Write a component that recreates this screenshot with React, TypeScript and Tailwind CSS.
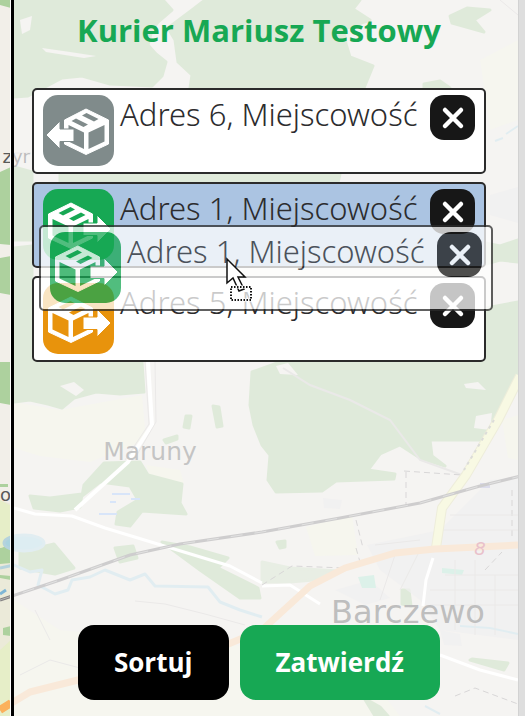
import type { ReactNode } from "react";

function MapBackground() {
  return (
    <svg
      className="absolute inset-0 h-full w-full"
      viewBox="0 0 525 716"
      preserveAspectRatio="xMinYMin slice"
      aria-hidden="true"
    >
      <rect width="525" height="716" fill="#e7e3df" />
      <rect width="12" height="716" fill="#f2efe9" />

      {/* fields */}
      <g fill="#e8e9d4">
        <path d="M14 402 L60 410 L142 395 L146 440 L90 462 L40 456 L14 448Z" />
        <path d="M14 600 L60 630 L160 640 L300 650 L380 690 L400 716 L0 716 L0 500 L14 505Z" opacity=".8" />
        <path d="M306 527 L352 515 L358 555 L315 556Z" />
        <path d="M146 465 L180 470 L184 483 L150 477Z" />
        <path d="M480 60 L518 40 L518 120 L490 130Z" opacity=".7" />
        <path d="M502 420 L518 415 L518 460 L508 458Z" />
      </g>

      {/* forests */}
      <g fill="#b0cba4" stroke="#b0cba4" strokeWidth="3" strokeLinejoin="round">
        <path d="M14 0 L163 0 L172 10 L158 22 L152 30 L148 45 L156 54 L166 62 L162 76 L152 86 L110 84 L82 76 L62 78 L28 96 L14 97Z" />
        <path d="M205 0 L360 0 L353 9 L370 20 L344 29 L346 44 L350 57 L373 66 L364 88 L190 88 L192 75 L178 62 L175 40 L168 28 L192 10Z" />
        <path d="M450 16 L467 8 L490 10 L474 20 L484 32 L452 23Z" />
        <path d="M424 84 L440 81 L450 88 L424 90Z" />
        <path d="M60 174 L340 174 L338 183 L60 183Z" />
        <path d="M14 167 L32 172 L32 240 L14 240Z M14 248 L32 246 L32 340 L14 340Z" />
        <path d="M486 243 L500 246 L518 240 L518 262 L500 260 L486 264Z" />
        <path d="M486 308 L518 302 L518 378 L486 378Z" />
        <path d="M14 300 L34 300 L34 362 L142 362 L144 392 L120 394 L96 392 L74 398 L62 408 L48 404 L30 400 L14 402Z" />
        <path d="M252 372 L280 362 L518 362 L518 378 L500 412 L480 440 L430 440 L432 456 L445 466 L420 458 L400 445 L380 454 L368 470 L395 474 L394 479 L336 481 L322 491 L276 492 L268 480 L270 455 L262 445 L254 425 L250 405Z" />
        <path d="M30 496 L50 498 L82 494 L80 507 L60 511 L34 508Z M84 485 L104 463 L140 462 L148 475 L182 484 L180 503 L186 514 L142 511 L130 526 L116 524 L118 512 L138 500 L130 486 L100 482 L82 496Z" />
        <path d="M20 552 L54 544 L74 568 L55 574 L20 568Z M115 548 L133 546 L137 558 L120 562Z" />
        <path d="M162 542 L190 547 L228 558 L218 568 L258 588 L260 598 L240 598 L200 570Z M213 406 L219 407 L222 426 L217 427Z M186 416 L191 416 L189 428 L184 427Z M164 440 L177 436 L177 439 L166 443Z M277 542 L285 541 L285 547 L280 548Z" />
        <path d="M262 562 L290 568 L338 571 L325 579 L290 582 L262 582Z" opacity=".6" />
        <path d="M402 590 L409 590 L411 606 L402 604Z M472 659 L508 663 L504 670 L470 660Z M364 698 L380 707 L388 716L375 716Z" />
      </g>
      <g fill="#e7e3df">
        <path d="M42 48 L70 52 L96 56 L84 58 L46 52Z M20 20 L32 16 L30 30 L22 34Z M60 386 L74 382 L84 390 L76 396Z M276 366 L288 363 L298 375 L280 374Z M464 384 L478 382 L486 390 L466 388Z M476 416 L492 413 L490 430 L474 428Z" />
      </g>
      <g fill="#add19e">
        <path d="M0 0 L11 0 L11 8 L0 5Z M0 172 L11 167 L11 245 L0 244Z M0 258 L11 256 L11 295 L0 293Z M0 362 L11 362 L11 405 L0 403Z M0 548 L11 545 L11 563 L0 564Z" />
        <path d="M0 484 h8 v3 h-8Z M0 575 L11 576 L11 580 L0 578Z M3 628 L11 626 L11 636 L3 635Z" />
      </g>
      <path d="M0 500 L11 506 L11 545 L0 548Z M0 650 L11 640 L11 716 L0 716Z" fill="#e6eec8" />

      {/* built-up area */}
      <g fill="#d8d8d9">
        <path d="M367 545 L440 530 L490 480 L518 478 L518 600 L518 640 L440 630 L420 600 L380 570Z" opacity=".7" />
        <path d="M335 590 L370 580 L390 598 L365 605Z M440 630 L460 634 L462 646 L444 645Z M323 498 L342 500 L340 509 L324 508Z M490 195 L525 185 L525 225 L490 215Z" opacity=".7" />
      </g>
      <path d="M358 577 L374 575 L376 588 L362 588Z M442 568 L464 570 L462 575 L442 573Z" fill="#a9dcc8" />
      <path d="M480 483 h10 v5 h-10Z" fill="#a8a9d0" />

      {/* water */}
      <g fill="none" stroke="#b5d3dd" strokeWidth="3">
        <ellipse cx="24" cy="543" rx="20" ry="8" fill="#aad3df" />
        <path d="M0 568 L14 565 L30 572 L42 570 L38 585 L55 594 L68 590 L72 580 L90 577 L105 570 L130 580 L145 574 L155 586 L208 587 L220 602 L240 610 L262 617" strokeLinejoin="round" />
        <path d="M112 494 h18 M131 499 h9 M110 502 h6 M99 514 h18" stroke="#9dbdf0" strokeWidth="2" />
        <path d="M460 626 L490 628 L518 634 M425 706 L440 714 M495 141 L503 138 M506 134 L518 126" strokeWidth="2" />
        <path d="M0 594 L6 590" stroke="#7fb6d6" />
      </g>

      {/* minor roads */}
      <g fill="none" stroke="#ffffff" strokeWidth="3" strokeLinejoin="round">
        <path d="M148 362 L152 425 L128 462 L75 510" strokeWidth="4" />
        <path d="M14 508 L35 514 L72 516 L105 528 L230 566 L262 583" />
        <path d="M433 558 L426 580 L423 606 M262 586 L290 585 L320 604 M440 655 L480 670 L518 680" />
      </g>
      <g fill="none" stroke="#cbc8c6" strokeWidth="1">
        <path d="M145 362 L149 424 L125 460 M155 362 L156 422 L134 460" />
        <path d="M283 368 L310 385 L350 400 L390 420 L420 460 L462 475" strokeWidth="2" />
        <path d="M135 601 L165 604 L205 614 L245 625 M20 675 L50 660 L80 668 M50 640 L35 610" />
        <path d="M404 471 L462 475 M406 472 L406 505 M356 520 L363 548 M356 548 L360 562 M262 585 L292 566 L345 568 M455 696 L475 688 L518 704 M485 570 L502 552 M512 490 L512 540" stroke="#9d9a9b" strokeDasharray="6 4" />
        <path d="M430 605 H518 M430 590 H518 M445 575 H518 M440 530 H518 M450 515 H518 M455 560 V630 M475 560 V635 M495 575 V635 M400 590 L420 550 M380 600 L395 555 M375 545 L420 540" />
        <path d="M500 0 L518 15 M14 153 H31" />
      </g>

      {/* main roads */}
      <g fill="none" strokeLinejoin="round">
        <path d="M520 376 L498 420 L466 475 L442 508 L436 548" stroke="#d3d2a5" strokeWidth="10" />
        <path d="M520 376 L498 420 L466 475 L442 508 L436 548" stroke="#eef0b8" strokeWidth="8" />
        <path d="M494 420 L464 470" stroke="#a8a9a0" strokeWidth="2" strokeDasharray="3 4" />
        <path d="M0 710 L30 692 L78 680 L190 660 L262 630 L310 586 L345 568 L395 553 L435 549 L518 545" stroke="#f0c8a0" strokeWidth="7" />
        <path d="M0 710 L11 703" stroke="#fbb15c" strokeWidth="8" />
        <path d="M0 600 L60 580 L130 555 L180 544 L262 532 L340 518 L420 503 L480 486 L525 475" stroke="#858384" strokeWidth="3" />
        <path d="M0 600 L60 580 L130 555 L180 544 L262 532 L340 518 L420 503 L480 486 L525 475" stroke="#b5b5b5" strokeDasharray="12 12" />
      </g>

      <g className="font-['DejaVu_Sans',sans-serif]" fill="#5a5a5a">
        <text x="150" y="460" fontSize="25" textAnchor="middle" fill="#6c6c6c">Maruny</text>
        <text x="408" y="623" fontSize="32" textAnchor="middle" fill="#5c5c5c">Barczewo</text>
        <text x="480" y="555" fontSize="18" textAnchor="middle" fontStyle="italic" fill="#c8647c">8</text>
        <text x="30" y="163" fontSize="18" textAnchor="end">zyr</text>
        <text x="11" y="501" fontSize="18" textAnchor="end">o</text>
      </g>
    </svg>
  );
}

function ParcelIcon({ kind }: { kind: "in" | "out" | "late" }) {
  const fill = { in: "#808b8b", out: "#17a854", late: "#e8930c" }[kind];
  return (
    <svg className="size-[71px] shrink-0" viewBox="0 0 71 71" aria-hidden="true">
      <rect width="71" height="71" rx="15" fill={fill} />
      <g transform={kind === "in" ? undefined : "translate(71 0) scale(-1 1)"}>
        <path
          d="M43 14 L65.500 25 V49 L43 59.500 L21.500 49 V25Z"
          fill="#fff"
          stroke="#fff"
          strokeWidth="1"
          strokeLinejoin="round"
        />
        <path
          d="M41 37.500 V54 L25.500 46.500 V30Z M45.500 37.500 L61.500 30 V46.500 L45.500 54Z M28.500 26 L33 23.500 L45 29.500 L40.500 32Z M39 20.500 L43.500 18 L55.500 24 L51 26.500Z"
          fill={fill}
        />
        <path d="M3 40 L17 26 V34 H31 V46.500 H17 V54Z" fill="#fff" stroke={fill} strokeWidth="1" />
      </g>
    </svg>
  );
}

function CloseIcon() {
  return (
    <svg className="size-6" viewBox="0 0 24 24" aria-hidden="true">
      <path d="M4 4 L20 20 M20 4 L4 20" stroke="#fff" strokeWidth="4.500" strokeLinecap="round" />
    </svg>
  );
}

function Card({
  icon,
  className = "bg-white",
  children,
}: {
  icon: "in" | "out" | "late";
  className?: string;
  children: ReactNode;
}) {
  return (
    <div
      className={`flex h-[86px] items-start gap-1.5 rounded-[5px] border-2 border-[#2b2b2b] pt-[5px] pr-[9px] pl-[9px] text-[#2c2c2e] ${className}`}
    >
      <ParcelIcon kind={icon} />
      <span className="min-w-0 flex-1 text-[31px] leading-[38px] font-light whitespace-nowrap">{children}</span>
      <button
        type="button"
        aria-label="Usuń"
        className="flex size-[45px] shrink-0 items-center justify-center rounded-[14px] bg-[#171717]"
      >
        <CloseIcon />
      </button>
    </div>
  );
}

function DragCursor() {
  return (
    <svg className="absolute top-8 left-[186px] h-12 w-8" viewBox="0 0 32 48" aria-hidden="true">
      <path
        d="M2 2 V26 L8 21 L14 34 L19 32 L13 20 H20Z"
        fill="#fff"
        stroke="#111"
        strokeWidth="1.500"
      />
      <rect x="6" y="30" width="20" height="13" fill="none" stroke="#fff" strokeWidth="3" />
      <rect x="6" y="30" width="20" height="13" fill="none" stroke="#111" strokeWidth="2" strokeDasharray="1.500 1.500" />
    </svg>
  );
}

export default function App() {
  return (
    <main className="relative flex min-h-screen overflow-hidden pl-[11px] font-['Noto_Sans','Open_Sans',sans-serif]">
      <MapBackground />
      <section className="relative flex min-w-0 flex-1 flex-col border-l-[3px] border-black bg-white/60 pr-8 pb-4 pl-[18px] shadow-[-1px_0_0_#ffffff]">
        <h1 className="pt-2 text-center font-['Open_Sans',sans-serif] text-[31px] leading-[44px] font-bold whitespace-nowrap text-[#17a854]">
          Kurier Mariusz Testowy
        </h1>
        <div className="relative mt-9">
          <ul className="flex flex-col gap-2">
            <li><Card icon="in">Adres 6, Miejscowość</Card></li>
            <li><Card icon="out" className="bg-[#abc4e2]">Adres 1, Miejscowość</Card></li>
            <li><Card icon="late">Adres 5, Miejscowość</Card></li>
          </ul>
          <div className="absolute top-[137px] left-[7px] w-full">
            <div className="opacity-75">
              <Card icon="out">Adres 1, Miejscowość</Card>
            </div>
            <DragCursor />
          </div>
        </div>
        <div className="mt-auto flex justify-center gap-[11px] pt-8 font-['Open_Sans',sans-serif] text-[26px] leading-[75px] font-bold text-white">
          <button type="button" className="rounded-2xl bg-black px-9">Sortuj</button>
          <button type="button" className="rounded-2xl bg-[#17a854] px-9">Zatwierdź</button>
        </div>
      </section>
      <div className="relative w-[7px] border-l border-[#d2d2d2] bg-[#dedede]" />
    </main>
  );
}
